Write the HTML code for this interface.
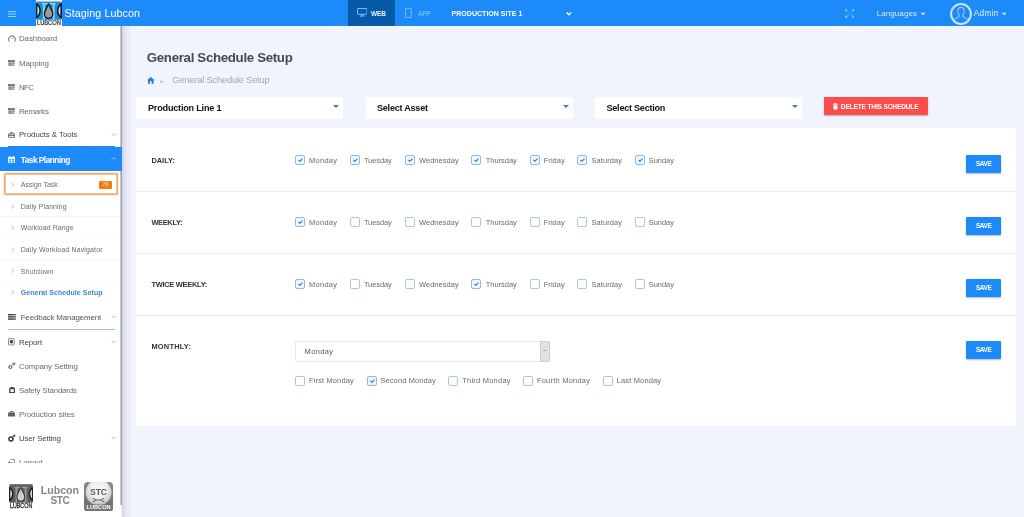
<!DOCTYPE html>
<html>
<head>
<meta charset="utf-8">
<title>General Schedule Setup</title>
<style>
*{box-sizing:border-box;margin:0;padding:0}
html,body{width:1024px;height:517px;overflow:hidden}
body{font-family:"Liberation Sans",sans-serif;background:#f1f4fd;color:#555;position:relative}
div,span,svg{position:absolute}
.t{white-space:nowrap;line-height:12px}
.b{font-weight:bold}
#wrap{left:0;top:0;width:1024px;height:517px;will-change:transform}
#top{left:0;top:0;width:1024px;height:26px;background:#1c8af8}
#side{left:0;top:26px;width:120px;height:491px;background:#fff}
#sidepre{left:120px;top:26px;width:1px;height:479px;background:#c9c9c9}
#sidepre2{left:120px;top:505px;width:1px;height:12px;background:#fff}
#sideline{left:121px;top:26px;width:1px;height:479px;background:#a2a2aa}
#sideshadow{left:122px;top:26px;width:10px;height:491px;background:linear-gradient(90deg,rgba(140,145,175,.30),rgba(140,145,175,.12) 40%,rgba(140,145,175,0))}
.subhr{left:0;width:120px;height:1px;background:#f5f5f5}
.sel{top:97px;height:22px;background:#fff;border-radius:1px}
.caret{top:105px;width:0;height:0;border-left:3.2px solid transparent;border-right:3.2px solid transparent;border-top:3.4px solid #2a7fe0}
.hr{left:136px;width:880px;height:1px;background:#ececf0}
.cb{width:10px;height:10px;border:1px solid #a6c8e0;border-radius:2px;background:#fff}
.on{border-color:#8fbcdd;background:#eef7fe}
.save{left:966px;width:35px;height:18px;background:#1c8af8;border-radius:1px;box-shadow:0 1px 2px rgba(0,0,0,.28)}
</style>
</head>
<body>
<div id="wrap">
<div id="top"></div><svg style="left:8px;top:10px;width:8px;height:8px" viewBox="0 0 8 8"><path d="M0 1.5 H8 M0 4 H8 M0 6.5 H8" stroke="#8fd2ff" stroke-width="1" fill="none"/></svg><svg style="left:35.5px;top:0px;width:26px;height:26px" viewBox="0 0 26 26"><rect width="26" height="26" fill="#eef3f6"/><rect x="0.6" y="1.6" width="24.6" height="18.2" fill="#1b8fcf"/><path d="M6 2.9 L19.6 2.9 L19.6 4.5 L18.6 4.5 L18.6 19.8 L16.8 19.8 L16.8 4.5 L8.8 4.5 L8.8 19.8 L7 19.8 L7 4.5 L6 4.5 Z" fill="#8fd0ee"/><path d="M0.6 3.9 A8.4 8.4 0 0 1 0.6 17.5 Z" fill="#d4e6ee" stroke="#07182e" stroke-width="1.6"/><path d="M25.2 3.9 A8.4 8.4 0 0 0 25.2 17.5 Z" fill="#d4e6ee" stroke="#07182e" stroke-width="1.6"/><path d="M12.6 3.4 C13.3 6.6 16.8 10.2 16.8 14.1 A4.2 4.2 0 0 1 8.4 14.1 C8.4 10.2 11.9 6.6 12.6 3.4 Z" fill="#a09a9c" stroke="#07182e" stroke-width="1.3"/><text x="1" y="25.4" textLength="23.8" lengthAdjust="spacingAndGlyphs" font-family="Liberation Sans, sans-serif" font-size="6.8" fill="#111" stroke="#111" stroke-width="0.1">LUBCON</text></svg><div class="t" style="left:64.5px;top:7.1px;font-size:10.7px;letter-spacing:0.094px;color:#fff;">Staging Lubcon</div><div style="left:348px;top:0;width:47px;height:26px;background:#055ba8"></div><div class="t b" style="left:371.1px;top:7.9px;font-size:6.5px;letter-spacing:-0.136px;color:#e6f5ff;">WEB</div><div class="t b" style="left:418.1px;top:7.9px;font-size:6.5px;letter-spacing:-0.287px;color:#6cbfff;">APP</div><div class="t b" style="left:451.6px;top:8.1px;font-size:7px;letter-spacing:0.025px;color:#fff;">PRODUCTION SITE 1</div><div class="t" style="left:876.7px;top:8.0px;font-size:8px;letter-spacing:0.088px;color:#d9ebfd;">Languages</div><div class="t" style="left:973.8px;top:7.2px;font-size:8.3px;letter-spacing:0.217px;color:#e6f2fe;">Admin</div><svg style="left:356.5px;top:8.2px;width:10.5px;height:8.6px" viewBox="0 0 10.5 8.6"><rect x="0.5" y="0.5" width="9.5" height="5.8" rx="0.5" fill="none" stroke="#93cdff" stroke-width="0.85"/><rect x="4.6" y="6.3" width="1.3" height="1.4" fill="#93cdff"/><rect x="3" y="7.6" width="4.5" height="0.9" fill="#93cdff"/></svg><svg style="left:405.3px;top:7.6px;width:6.8px;height:10px" viewBox="0 0 6.8 10"><rect x="0.5" y="0.5" width="5.8" height="9" rx="0.7" fill="none" stroke="#62baff" stroke-width="1.2"/></svg><svg style="left:566.2px;top:12.3px;width:5.8px;height:3.4px" viewBox="0 0 10 6"><path d="M1 1 L5 5 L9 1" fill="none" stroke="#fff" stroke-width="2.4"/></svg><svg style="left:844.6px;top:8.6px;width:9.6px;height:9px" viewBox="0 0 9.6 9"><g stroke="#58b4ff" stroke-width="1" fill="none"><path d="M1.2 1.2 L3.9 3.7 M8.4 1.2 L5.7 3.7 M1.2 7.8 L3.9 5.3 M8.4 7.8 L5.7 5.3"/></g><g fill="#8cd8ff"><path d="M0.3 0.3 H2.9 L0.3 2.9 Z M9.3 0.3 H6.7 L9.3 2.9 Z M0.3 8.7 H2.9 L0.3 6.1 Z M9.3 8.7 H6.7 L9.3 6.1 Z"/></g></svg><svg style="left:920.8px;top:12.1px;width:4.4px;height:3.2px" viewBox="0 0 10 6"><path d="M1 1 L5 5 L9 1" fill="none" stroke="#e6f2fe" stroke-width="2.6"/></svg><svg style="left:950px;top:3px;width:22px;height:22px" viewBox="0 0 22 22"><circle cx="11" cy="11" r="9.9" fill="none" stroke="#c8e7ff" stroke-width="2"/><path d="M11 4.4 C8.6 4.4 7.6 6.2 7.8 8.3 C8 10.4 8.8 11.6 9.4 12.3 C9.5 13.6 8.9 14.2 7.4 14.8 C5.6 15.5 4.6 16.2 4.2 17.6 M11 4.4 C13.4 4.4 14.4 6.2 14.2 8.3 C14 10.4 13.2 11.6 12.6 12.3 C12.5 13.6 13.1 14.2 14.6 14.8 C16.4 15.5 17.4 16.2 17.8 17.6" fill="none" stroke="#8fccff" stroke-width="1.1"/></svg><svg style="left:1002px;top:12.1px;width:4.4px;height:3.2px" viewBox="0 0 10 6"><path d="M1 1 L5 5 L9 1" fill="none" stroke="#e6f2fe" stroke-width="2.6"/></svg>
<div id="side"></div><div id="sidepre2"></div><div id="sidepre"></div><div id="sideline"></div><div id="sideshadow"></div>
<div class="t" style="left:18.9px;top:33.4px;font-size:7.9px;letter-spacing:-0.039px;color:#6a6a6a;">Dashboard</div><div class="t" style="left:18.9px;top:57.5px;font-size:7.9px;letter-spacing:-0.030px;color:#6a6a6a;">Mapping</div><div class="t" style="left:18.9px;top:81.6px;font-size:7.9px;letter-spacing:-0.600px;color:#6a6a6a;">NFC</div><div class="t" style="left:18.9px;top:105.5px;font-size:7.9px;letter-spacing:-0.246px;color:#6a6a6a;">Remarks</div><div class="t" style="left:18.9px;top:129.4px;font-size:7.9px;letter-spacing:-0.045px;color:#444;">Products &amp; Tools</div><div style="left:8px;top:146px;width:107px;height:1px;background:#2f86e0"></div><div style="left:0;top:147px;width:122px;height:24px;background:#1c8af8"></div><div class="t b" style="left:20.7px;top:153.9px;font-size:8.3px;letter-spacing:-0.495px;color:#fff;">Task Planning</div><div style="left:4px;top:173px;width:114px;height:22px;border:1px solid #eaa470;border-radius:1px;box-shadow:inset 0 0 0 1px rgba(234,164,112,.6),0 0 2px rgba(240,150,70,.55)"></div><div style="left:99px;top:181px;width:13px;height:7.5px;background:#ee7d12;border-radius:1px"></div><div class="t b" style="left:102.7px;top:179.0px;font-size:4.6px;letter-spacing:0.475px;color:#fde0ae;">76</div><div class="t" style="left:20.7px;top:179.1px;font-size:6.95px;letter-spacing:0.021px;color:#6a6a6a;">Assign Task</div><div class="t" style="left:20.7px;top:200.8px;font-size:6.95px;letter-spacing:0.119px;color:#6a6a6a;">Daily Planning</div><div class="t" style="left:20.7px;top:222.4px;font-size:6.95px;letter-spacing:0.104px;color:#6a6a6a;">Workload Range</div><div class="t" style="left:20.7px;top:243.8px;font-size:6.95px;letter-spacing:0.158px;color:#6a6a6a;">Daily Workload Navigator</div><div class="t" style="left:20.7px;top:265.5px;font-size:6.95px;letter-spacing:0.263px;color:#6a6a6a;">Shutdown</div><div class="t b" style="left:20.7px;top:286.8px;font-size:6.95px;letter-spacing:0.095px;color:#3a86cf;">General Schedule Setup</div><div class="subhr" style="top:216px"></div><div class="subhr" style="top:238px"></div><div class="subhr" style="top:259px"></div><div class="subhr" style="top:281px"></div><div class="t" style="left:20.7px;top:311.8px;font-size:7.9px;letter-spacing:-0.134px;color:#555;">Feedback Management</div><div class="t" style="left:18.9px;top:336.6px;font-size:7.9px;letter-spacing:-0.098px;color:#444;">Report</div><div class="t" style="left:18.9px;top:360.8px;font-size:7.9px;letter-spacing:-0.102px;color:#6a6a6a;">Company Setting</div><div class="t" style="left:18.9px;top:384.5px;font-size:7.9px;letter-spacing:-0.163px;color:#6a6a6a;">Safety Standards</div><div class="t" style="left:18.9px;top:408.7px;font-size:7.9px;letter-spacing:-0.016px;color:#6a6a6a;">Production sites</div><div class="t" style="left:18.9px;top:432.6px;font-size:7.9px;letter-spacing:-0.120px;color:#444;">User Setting</div><div class="t" style="left:18.9px;top:456.8px;font-size:7.9px;letter-spacing:-0.048px;color:#6a6a6a;">Logout</div><div style="left:8px;top:329px;width:107px;height:1px;background:#a4bfd3"></div><svg style="left:7.9px;top:35px;width:7.8px;height:7.6px" viewBox="0 0 7.8 7.6"><path d="M1.5 6.7 A3.3 3.3 0 1 1 6.3 6.7" fill="none" stroke="#858585" stroke-width="1.1"/><path d="M3.9 4 L5.2 2.6" stroke="#858585" stroke-width="1" fill="none"/></svg><svg style="left:8.2px;top:59.8px;width:6.9px;height:6.6px" viewBox="0 0 7 6.6"><rect x="0" y="0" width="7" height="2.2" fill="#787878"/><rect x="0" y="2.2" width="7" height="4.4" fill="#b4b4b4"/><rect x="0.9" y="3.1" width="2.6" height="1.5" fill="#858585"/><rect x="4.1" y="3.1" width="2" height="1" fill="#9a9a9a"/><rect x="0.9" y="5.1" width="3.6" height="0.8" fill="#979797"/></svg><svg style="left:8.2px;top:83.8px;width:6.9px;height:6.6px" viewBox="0 0 7 6.6"><rect x="0" y="0" width="7" height="2.2" fill="#787878"/><rect x="0" y="2.2" width="7" height="4.4" fill="#b4b4b4"/><rect x="0.9" y="3.1" width="2.6" height="1.5" fill="#858585"/><rect x="4.1" y="3.1" width="2" height="1" fill="#9a9a9a"/><rect x="0.9" y="5.1" width="3.6" height="0.8" fill="#979797"/></svg><svg style="left:8.2px;top:107.8px;width:6.9px;height:6.6px" viewBox="0 0 7 6.6"><rect x="0" y="0" width="7" height="2.2" fill="#787878"/><rect x="0" y="2.2" width="7" height="4.4" fill="#b4b4b4"/><rect x="0.9" y="3.1" width="2.6" height="1.5" fill="#858585"/><rect x="4.1" y="3.1" width="2" height="1" fill="#9a9a9a"/><rect x="0.9" y="5.1" width="3.6" height="0.8" fill="#979797"/></svg><svg style="left:8.2px;top:131.9px;width:7.2px;height:5.8px" viewBox="0 0 7.2 6"><path d="M0.5 2 H6.7 V5.5 H0.5 Z M0.5 3.6 H6.7 M2.3 2 V1 Q2.3 0.5 2.8 0.5 H4.4 Q4.9 0.5 4.9 1 V2" fill="none" stroke="#4c4c4c" stroke-width="0.8"/></svg><svg style="left:110.6px;top:132.8px;width:5.6px;height:3.2px" viewBox="0 0 10 6"><path d="M1 1 L5 5 L9 1" fill="none" stroke="#8a8a8a" stroke-width="1.1"/></svg><svg preserveAspectRatio="none" style="left:8.2px;top:156px;width:7.2px;height:7.3px" viewBox="0 0 7 7"><rect x="0" y="0.8" width="7" height="6.2" rx="0.6" fill="#e8f3fe"/><rect x="1.2" y="0" width="1" height="1.5" fill="#e8f3fe"/><rect x="4.8" y="0" width="1" height="1.5" fill="#e8f3fe"/><rect x="1.2" y="2.9" width="1.9" height="1.3" fill="#3d9af8"/><rect x="1.2" y="4.8" width="1.9" height="1.3" fill="#3d9af8"/><rect x="3.9" y="2.9" width="1.9" height="1.3" fill="#3d9af8"/><rect x="3.9" y="4.8" width="1.9" height="1.3" fill="#3d9af8"/></svg><svg style="left:110.6px;top:157.4px;width:5.6px;height:3.2px" viewBox="0 0 10 6"><path d="M1 5 L5 1 L9 5" fill="none" stroke="#c4e2fd" stroke-width="1.4"/></svg><svg style="left:11.2px;top:182.0px;width:3.6px;height:5.2px" viewBox="0 0 3.6 5.2"><path d="M0.6 0.5 L3 2.6 L0.6 4.7" fill="none" stroke="#aaa" stroke-width="0.7"/></svg><svg style="left:11.2px;top:203.70000000000002px;width:3.6px;height:5.2px" viewBox="0 0 3.6 5.2"><path d="M0.6 0.5 L3 2.6 L0.6 4.7" fill="none" stroke="#aaa" stroke-width="0.7"/></svg><svg style="left:11.2px;top:225.3px;width:3.6px;height:5.2px" viewBox="0 0 3.6 5.2"><path d="M0.6 0.5 L3 2.6 L0.6 4.7" fill="none" stroke="#aaa" stroke-width="0.7"/></svg><svg style="left:11.2px;top:246.70000000000002px;width:3.6px;height:5.2px" viewBox="0 0 3.6 5.2"><path d="M0.6 0.5 L3 2.6 L0.6 4.7" fill="none" stroke="#aaa" stroke-width="0.7"/></svg><svg style="left:11.2px;top:268.4px;width:3.6px;height:5.2px" viewBox="0 0 3.6 5.2"><path d="M0.6 0.5 L3 2.6 L0.6 4.7" fill="none" stroke="#aaa" stroke-width="0.7"/></svg><svg style="left:11.2px;top:289.7px;width:3.6px;height:5.2px" viewBox="0 0 3.6 5.2"><path d="M0.6 0.5 L3 2.6 L0.6 4.7" fill="none" stroke="#aaa" stroke-width="0.7"/></svg><svg style="left:7.9px;top:314.4px;width:7.8px;height:5.9px" viewBox="0 0 7.8 5.9"><rect x="0" y="0" width="7.8" height="1.4" fill="#3a3a3a"/><rect x="0" y="2.2" width="7.8" height="1.4" fill="#3a3a3a"/><rect x="0" y="4.4" width="7.8" height="1.4" fill="#3a3a3a"/><rect x="5" y="0.4" width="2.4" height="0.5" fill="#aaa"/><rect x="4" y="2.6" width="3.4" height="0.5" fill="#aaa"/><rect x="5" y="4.8" width="2.4" height="0.5" fill="#aaa"/></svg><svg style="left:110.6px;top:315.2px;width:5.6px;height:3.2px" viewBox="0 0 10 6"><path d="M1 1 L5 5 L9 1" fill="none" stroke="#8a8a8a" stroke-width="1.1"/></svg><svg style="left:8.4px;top:338.4px;width:6.6px;height:7.4px" viewBox="0 0 6.6 7.4"><rect x="0.45" y="0.45" width="5.7" height="6.5" rx="0.6" fill="none" stroke="#666" stroke-width="0.75"/><rect x="1.9" y="2.1" width="3" height="3.2" fill="#444"/></svg><svg style="left:110.6px;top:340px;width:5.6px;height:3.2px" viewBox="0 0 10 6"><path d="M1 1 L5 5 L9 1" fill="none" stroke="#8a8a8a" stroke-width="1.1"/></svg><svg style="left:8px;top:362.2px;width:8px;height:7.4px" viewBox="0 0 8 7.4"><circle cx="2.4" cy="5" r="1.55" fill="none" stroke="#444" stroke-width="0.95"/><circle cx="5.8" cy="1.9" r="1.1" fill="none" stroke="#444" stroke-width="0.85"/></svg><svg style="left:8.7px;top:387.1px;width:6.3px;height:6.4px" viewBox="0 0 6.3 6.4"><rect x="0.2" y="0.7" width="5.9" height="5.6" rx="0.5" fill="#4a4a4a"/><rect x="1.7" y="0" width="2.9" height="1.3" fill="#333"/><rect x="1.5" y="2.1" width="3.3" height="2.9" fill="#f4f4f4"/></svg><svg style="left:8.2px;top:411.2px;width:7.2px;height:5.4px" viewBox="0 0 7.2 5.4"><rect x="0" y="1.4" width="7.2" height="4" rx="0.6" fill="#5a5a5a"/><path d="M2.3 1.6 V0.5 H4.9 V1.6" fill="none" stroke="#5a5a5a" stroke-width="0.9"/><rect x="0" y="3" width="7.2" height="0.4" fill="#8a8a8a"/></svg><svg style="left:7.6px;top:434px;width:8.4px;height:8px" viewBox="0 0 8.4 8"><circle cx="3" cy="4.9" r="2" fill="none" stroke="#333" stroke-width="1.5"/><circle cx="6.3" cy="1.7" r="0.8" fill="none" stroke="#333" stroke-width="1"/><path d="M4.3 3.5 L5.7 2.2" stroke="#333" stroke-width="1"/></svg><svg style="left:110.6px;top:436px;width:5.6px;height:3.2px" viewBox="0 0 10 6"><path d="M1 1 L5 5 L9 1" fill="none" stroke="#8a8a8a" stroke-width="1.1"/></svg><svg style="left:8.2px;top:458.6px;width:7px;height:7px" viewBox="0 0 7 7"><path d="M2.6 0.5 H6.5 V6.5 H2.6 M0.4 3.5 H4.4 M1.8 2 L0.4 3.5 L1.8 5" fill="none" stroke="#777" stroke-width="0.8"/></svg><div style="left:0;top:463px;width:120px;height:54px;background:#fff"></div><svg preserveAspectRatio="none" style="left:8.9px;top:484.4px;width:24.4px;height:24.6px" viewBox="0 0 26 26"><rect width="26" height="26" fill="#fff"/><rect x="0.6" y="0.2" width="24.6" height="19.6" fill="#5e5e5e"/><path d="M6 2.9 L19.6 2.9 L19.6 4.5 L18.6 4.5 L18.6 19.8 L16.8 19.8 L16.8 4.5 L8.8 4.5 L8.8 19.8 L7 19.8 L7 4.5 L6 4.5 Z" fill="#9c9c9c"/><path d="M0.6 3.9 A8.4 8.4 0 0 1 0.6 17.5 Z" fill="#e4e4e4" stroke="#222" stroke-width="1.6"/><path d="M25.2 3.9 A8.4 8.4 0 0 0 25.2 17.5 Z" fill="#e4e4e4" stroke="#222" stroke-width="1.6"/><path d="M12.6 3.4 C13.3 6.6 16.8 10.2 16.8 14.1 A4.2 4.2 0 0 1 8.4 14.1 C8.4 10.2 11.9 6.6 12.6 3.4 Z" fill="#cdcdcd" stroke="#222" stroke-width="1.0"/><text x="1" y="25.4" textLength="23.8" lengthAdjust="spacingAndGlyphs" font-family="Liberation Sans, sans-serif" font-size="6.8" fill="#2a2a2a" stroke="#2a2a2a" stroke-width="0.3">LUBCON</text></svg><svg style="left:84px;top:481.5px;width:29px;height:29.4px" viewBox="0 0 29 29.4"><defs><radialGradient id="rg" cx="50%" cy="42%" r="52%"><stop offset="0" stop-color="#fdfdfd"/><stop offset="0.65" stop-color="#ededed"/><stop offset="1" stop-color="#c6c6c6"/></radialGradient><linearGradient id="lg" x1="0" y1="0" x2="0" y2="1"><stop offset="0" stop-color="#8a8a8a"/><stop offset="1" stop-color="#666"/></linearGradient><clipPath id="cp"><rect x="0" y="0" width="29" height="29.4" rx="4"/></clipPath></defs><g clip-path="url(#cp)"><rect width="29" height="29.4" fill="url(#lg)"/><circle cx="14.6" cy="10.4" r="13" fill="url(#rg)"/><rect x="0" y="22.5" width="29" height="7" fill="#767676"/></g><text x="14.5" y="13.2" text-anchor="middle" font-family="Liberation Sans, sans-serif" font-weight="bold" font-size="8.6" fill="#5c5c5c">STC</text><path d="M11 18 H18" stroke="#666" stroke-width="1.1"/><path d="M8.8 16.6 H10 A1.4 1.4 0 0 1 10 19.4 H8.8 M20.2 16.6 H19 A1.4 1.4 0 0 0 19 19.4 H20.2" fill="none" stroke="#666" stroke-width="1"/><text x="2.6" y="27.5" textLength="24" lengthAdjust="spacingAndGlyphs" font-family="Liberation Sans, sans-serif" font-weight="bold" font-size="5.8" fill="#fff">LUBCON</text></svg><div class="t b" style="left:40.8px;top:484.4px;font-size:10.67px;letter-spacing:-0.057px;color:#878787;">Lubcon</div><div class="t b" style="left:50.6px;top:495.3px;font-size:10.2px;letter-spacing:-0.600px;color:#878787;">STC</div>
<div class="t b" style="left:146.8px;top:52.2px;font-size:13.3px;letter-spacing:-0.332px;color:#464953;">General Schedule Setup</div><div class="t" style="left:159.8px;top:74.7px;font-size:6.2px;letter-spacing:0.047px;color:#999;">&raquo;</div><div class="t" style="left:172.3px;top:74.0px;font-size:9.4px;letter-spacing:-0.226px;color:#a6a6aa;">General Schedule Setup</div><div class="sel" style="left:136px;width:207px"></div><div class="t b" style="left:148.0px;top:102.4px;font-size:9.1px;letter-spacing:-0.206px;color:#111;">Production Line 1</div><div class="caret" style="left:333.3px"></div><div class="sel" style="left:366px;width:207px"></div><div class="t b" style="left:377.0px;top:102.4px;font-size:9.1px;letter-spacing:-0.250px;color:#111;">Select Asset</div><div class="caret" style="left:563.3px"></div><div class="sel" style="left:595px;width:207px"></div><div class="t b" style="left:606.5px;top:102.4px;font-size:9.1px;letter-spacing:-0.252px;color:#111;">Select Section</div><div class="caret" style="left:792.3px"></div><div style="left:824px;top:97px;width:104px;height:18px;background:#fc4d4d;border-radius:1px;box-shadow:0 1px 2px rgba(0,0,0,.28)"></div><div class="t b" style="left:840.8px;top:101.1px;font-size:6.6px;letter-spacing:-0.167px;color:#fff;">DELETE THIS SCHEDULE</div>
<div style="left:136px;top:128px;width:880px;height:298px;background:#fff;border-radius:2px"></div><div class="hr" style="top:191px"></div><div class="hr" style="top:253px"></div><div class="hr" style="top:315px"></div><div class="t b" style="left:151.4px;top:155.4px;font-size:7.45px;letter-spacing:-0.013px;color:#333;">DAILY:</div><div class="cb on" style="left:295px;top:155px"><svg style="left:1.5px;top:2px;width:5px;height:4px" viewBox="0 0 10 8"><path d="M1 4 L3.8 6.6 L9 1.2" fill="none" stroke="#3f7fb8" stroke-width="2.3"/></svg></div><div class="t" style="left:309.0px;top:154.6px;font-size:7.45px;letter-spacing:0.306px;color:#6a6a6a;">Monday</div><div class="cb on" style="left:350px;top:155px"><svg style="left:1.5px;top:2px;width:5px;height:4px" viewBox="0 0 10 8"><path d="M1 4 L3.8 6.6 L9 1.2" fill="none" stroke="#3f7fb8" stroke-width="2.3"/></svg></div><div class="t" style="left:363.9px;top:154.6px;font-size:7.45px;letter-spacing:-0.058px;color:#6a6a6a;">Tuesday</div><div class="cb on" style="left:405px;top:155px"><svg style="left:1.5px;top:2px;width:5px;height:4px" viewBox="0 0 10 8"><path d="M1 4 L3.8 6.6 L9 1.2" fill="none" stroke="#3f7fb8" stroke-width="2.3"/></svg></div><div class="t" style="left:419.0px;top:154.6px;font-size:7.45px;letter-spacing:0.068px;color:#6a6a6a;">Wednesday</div><div class="cb on" style="left:471px;top:155px"><svg style="left:1.5px;top:2px;width:5px;height:4px" viewBox="0 0 10 8"><path d="M1 4 L3.8 6.6 L9 1.2" fill="none" stroke="#3f7fb8" stroke-width="2.3"/></svg></div><div class="t" style="left:485.7px;top:154.6px;font-size:7.45px;letter-spacing:0.012px;color:#6a6a6a;">Thursday</div><div class="cb on" style="left:530px;top:155px"><svg style="left:1.5px;top:2px;width:5px;height:4px" viewBox="0 0 10 8"><path d="M1 4 L3.8 6.6 L9 1.2" fill="none" stroke="#3f7fb8" stroke-width="2.3"/></svg></div><div class="t" style="left:543.7px;top:154.6px;font-size:7.45px;letter-spacing:0.086px;color:#6a6a6a;">Friday</div><div class="cb on" style="left:577px;top:155px"><svg style="left:1.5px;top:2px;width:5px;height:4px" viewBox="0 0 10 8"><path d="M1 4 L3.8 6.6 L9 1.2" fill="none" stroke="#3f7fb8" stroke-width="2.3"/></svg></div><div class="t" style="left:591.4px;top:154.6px;font-size:7.45px;letter-spacing:0.131px;color:#6a6a6a;">Saturday</div><div class="cb on" style="left:635px;top:155px"><svg style="left:1.5px;top:2px;width:5px;height:4px" viewBox="0 0 10 8"><path d="M1 4 L3.8 6.6 L9 1.2" fill="none" stroke="#3f7fb8" stroke-width="2.3"/></svg></div><div class="t" style="left:648.7px;top:154.6px;font-size:7.45px;letter-spacing:0.013px;color:#6a6a6a;">Sunday</div><div class="save" style="top:155px"></div><div class="t b" style="left:975.9px;top:158.2px;font-size:6.4px;letter-spacing:-0.346px;color:#fff;">SAVE</div>
<div class="t b" style="left:151.4px;top:217.4px;font-size:7.45px;letter-spacing:-0.327px;color:#333;">WEEKLY:</div><div class="cb on" style="left:295px;top:217px"><svg style="left:1.5px;top:2px;width:5px;height:4px" viewBox="0 0 10 8"><path d="M1 4 L3.8 6.6 L9 1.2" fill="none" stroke="#3f7fb8" stroke-width="2.3"/></svg></div><div class="t" style="left:309.0px;top:216.6px;font-size:7.45px;letter-spacing:0.306px;color:#6a6a6a;">Monday</div><div class="cb" style="left:350px;top:217px"></div><div class="t" style="left:363.9px;top:216.6px;font-size:7.45px;letter-spacing:-0.058px;color:#6a6a6a;">Tuesday</div><div class="cb" style="left:405px;top:217px"></div><div class="t" style="left:419.0px;top:216.6px;font-size:7.45px;letter-spacing:0.068px;color:#6a6a6a;">Wednesday</div><div class="cb" style="left:471px;top:217px"></div><div class="t" style="left:485.7px;top:216.6px;font-size:7.45px;letter-spacing:0.012px;color:#6a6a6a;">Thursday</div><div class="cb" style="left:530px;top:217px"></div><div class="t" style="left:543.7px;top:216.6px;font-size:7.45px;letter-spacing:0.086px;color:#6a6a6a;">Friday</div><div class="cb" style="left:577px;top:217px"></div><div class="t" style="left:591.4px;top:216.6px;font-size:7.45px;letter-spacing:0.131px;color:#6a6a6a;">Saturday</div><div class="cb" style="left:635px;top:217px"></div><div class="t" style="left:648.7px;top:216.6px;font-size:7.45px;letter-spacing:0.013px;color:#6a6a6a;">Sunday</div><div class="save" style="top:217px"></div><div class="t b" style="left:975.9px;top:220.2px;font-size:6.4px;letter-spacing:-0.346px;color:#fff;">SAVE</div>
<div class="t b" style="left:151.4px;top:279.4px;font-size:7.45px;letter-spacing:-0.266px;color:#333;">TWICE WEEKLY:</div><div class="cb on" style="left:295px;top:279px"><svg style="left:1.5px;top:2px;width:5px;height:4px" viewBox="0 0 10 8"><path d="M1 4 L3.8 6.6 L9 1.2" fill="none" stroke="#3f7fb8" stroke-width="2.3"/></svg></div><div class="t" style="left:309.0px;top:278.6px;font-size:7.45px;letter-spacing:0.306px;color:#6a6a6a;">Monday</div><div class="cb" style="left:350px;top:279px"></div><div class="t" style="left:363.9px;top:278.6px;font-size:7.45px;letter-spacing:-0.058px;color:#6a6a6a;">Tuesday</div><div class="cb" style="left:405px;top:279px"></div><div class="t" style="left:419.0px;top:278.6px;font-size:7.45px;letter-spacing:0.068px;color:#6a6a6a;">Wednesday</div><div class="cb on" style="left:471px;top:279px"><svg style="left:1.5px;top:2px;width:5px;height:4px" viewBox="0 0 10 8"><path d="M1 4 L3.8 6.6 L9 1.2" fill="none" stroke="#3f7fb8" stroke-width="2.3"/></svg></div><div class="t" style="left:485.7px;top:278.6px;font-size:7.45px;letter-spacing:0.012px;color:#6a6a6a;">Thursday</div><div class="cb" style="left:530px;top:279px"></div><div class="t" style="left:543.7px;top:278.6px;font-size:7.45px;letter-spacing:0.086px;color:#6a6a6a;">Friday</div><div class="cb" style="left:577px;top:279px"></div><div class="t" style="left:591.4px;top:278.6px;font-size:7.45px;letter-spacing:0.131px;color:#6a6a6a;">Saturday</div><div class="cb" style="left:635px;top:279px"></div><div class="t" style="left:648.7px;top:278.6px;font-size:7.45px;letter-spacing:0.013px;color:#6a6a6a;">Sunday</div><div class="save" style="top:279px"></div><div class="t b" style="left:975.9px;top:282.2px;font-size:6.4px;letter-spacing:-0.346px;color:#fff;">SAVE</div>
<div class="t b" style="left:151.4px;top:341.4px;font-size:7.45px;letter-spacing:0.226px;color:#333;">MONTHLY:</div><div style="left:295px;top:341px;width:255px;height:21px;background:#fff;border:1px solid #e8e8e8;border-radius:2px"></div><div style="left:540px;top:341px;width:10px;height:21px;background:#e2e2e2;border:1px solid #cdcdcd;border-radius:0 2px 2px 0"></div><div class="t" style="left:304.6px;top:345.6px;font-size:7.45px;letter-spacing:0.366px;color:#555;">Monday</div><div class="save" style="top:341px"></div><div class="t b" style="left:975.9px;top:344.2px;font-size:6.4px;letter-spacing:-0.346px;color:#fff;">SAVE</div><div class="cb" style="left:295px;top:376px"></div><div class="t" style="left:309.0px;top:375.1px;font-size:7.45px;letter-spacing:0.156px;color:#6a6a6a;">First Monday</div><div class="cb on" style="left:367px;top:376px"><svg style="left:1.5px;top:2px;width:5px;height:4px" viewBox="0 0 10 8"><path d="M1 4 L3.8 6.6 L9 1.2" fill="none" stroke="#3f7fb8" stroke-width="2.3"/></svg></div><div class="t" style="left:380.4px;top:375.1px;font-size:7.45px;letter-spacing:0.136px;color:#6a6a6a;">Second Monday</div><div class="cb" style="left:448px;top:376px"></div><div class="t" style="left:462.3px;top:375.1px;font-size:7.45px;letter-spacing:0.247px;color:#6a6a6a;">Third Monday</div><div class="cb" style="left:523px;top:376px"></div><div class="t" style="left:536.9px;top:375.1px;font-size:7.45px;letter-spacing:0.256px;color:#6a6a6a;">Fourth Monday</div><div class="cb" style="left:603px;top:376px"></div><div class="t" style="left:616.6px;top:375.1px;font-size:7.45px;letter-spacing:0.191px;color:#6a6a6a;">Last Monday</div><svg style="left:147.2px;top:77.1px;width:7.6px;height:6.7px" viewBox="0 0 7.2 6.3"><path d="M3.6 0 L7.2 3.1 L6.3 3.1 L6.3 6.3 L4.4 6.3 L4.4 4.1 L2.8 4.1 L2.8 6.3 L0.9 6.3 L0.9 3.1 L0 3.1 Z" fill="#2a7de1"/></svg><svg style="left:832.9px;top:103.2px;width:4.9px;height:6.5px" viewBox="0 0 4.9 6.5"><rect x="0" y="0.8" width="4.9" height="0.9" fill="#fff"/><rect x="1.5" y="0" width="1.9" height="0.9" fill="#fff"/><path d="M0.5 2.2 H4.4 V5.8 Q4.4 6.5 3.7 6.5 H1.2 Q0.5 6.5 0.5 5.8 Z" fill="#fff"/></svg><svg style="left:542.6px;top:349.4px;width:3.3px;height:2.5px" viewBox="0 0 10 6"><path d="M1 1 L5 5 L9 1" fill="none" stroke="#6a6a6a" stroke-width="2.2"/></svg>
</div>
</body>
</html>
